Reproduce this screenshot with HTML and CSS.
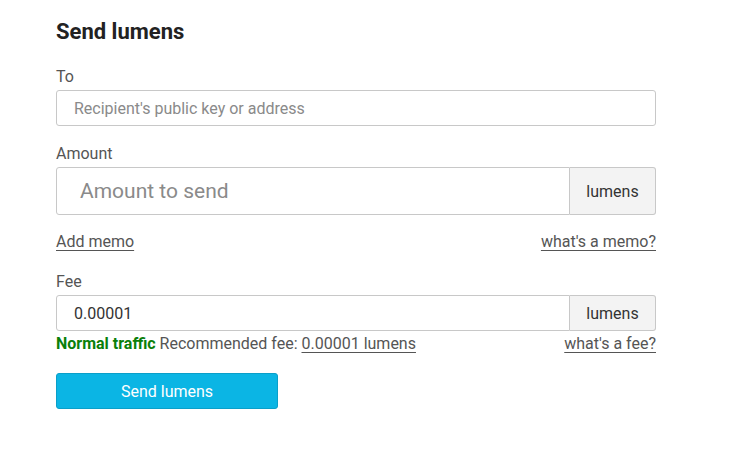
FILE: index.html
```html
<!DOCTYPE html>
<html>
<head>
<meta charset="utf-8">
<link rel="stylesheet" href="styles.css">
</head>
<body>
<div class="send">
  <h1 class="title">Send lumens</h1>
  <div class="field">
    <label class="label">To</label>
    <div class="input input--sm"><span class="placeholder">Recipient's public key or address</span></div>
  </div>
  <div class="field field--amount">
    <label class="label">Amount</label>
    <div class="group group--lg">
      <div class="input input--lg"><span class="placeholder placeholder--lg">Amount to send</span></div>
      <div class="addon">lumens</div>
    </div>
  </div>
  <div class="links">
    <a class="link">Add memo</a>
    <a class="link">what's a memo?</a>
  </div>
  <div class="field field--fee">
    <label class="label">Fee</label>
    <div class="group">
      <div class="input input--sm"><span class="value">0.00001</span></div>
      <div class="addon">lumens</div>
    </div>
    <div class="help">
      <span><b class="traffic">Normal traffic</b> Recommended fee: <a class="link">0.00001 lumens</a></span>
      <a class="link">what's a fee?</a>
    </div>
  </div>
  <button class="btn">Send lumens</button>
</div>
</body>
</html>
```

FILE: styles.css
```css
* { box-sizing: border-box; }
html, body { margin: 0; background: #fff; }
body {
  font-family: Roboto, "Liberation Sans", sans-serif;
  font-size: 16px;
  color: #444;
}
.send {
  width: 656px;
  padding: 19px 0 0 56px;
}
.title {
  margin: 0 0 22px;
  font-size: 22px;
  line-height: 26px;
  font-weight: 700;
  color: #222;
}
.field { display: flex; flex-direction: column; }
.label {
  font-size: 16px;
  line-height: 20px;
  color: #555;
  margin-bottom: 3px;
}
.input {
  display: flex;
  align-items: center;
  border: 1px solid #c8c8c8;
  border-radius: 3px;
  background: #fff;
  padding-left: 17px;
}
.input--sm { height: 36px; }
.input--lg { height: 48px; padding-left: 23px; }
.placeholder { color: #8a8a8a; font-size: 16px; }
.placeholder--lg { font-size: 21px; }
.value { color: #333; font-size: 16px; }
.field--amount { margin-top: 18px; }
.group { display: flex; }
.group .input { flex: 1; border-radius: 3px 0 0 3px; }
.addon {
  width: 86px;
  display: flex;
  align-items: center;
  justify-content: center;
  background: #f3f3f3;
  border: 1px solid #c8c8c8;
  border-left: none;
  border-radius: 0 3px 3px 0;
  color: #333;
  font-size: 16px;
}
.links {
  display: flex;
  justify-content: space-between;
  margin-top: 17px;
  line-height: 20px;
}
.link {
  color: #555;
  text-decoration: underline;
  text-underline-offset: 3px;
  font-size: 16px;
}
.field--fee { margin-top: 20px; }
.help {
  display: flex;
  justify-content: space-between;
  margin-top: 3px;
  line-height: 20px;
  font-size: 16px;
  color: #555;
}
.traffic { color: #0a7f0a; font-weight: 700; }
.btn {
  display: block;
  margin-top: 19px;
  width: 222px;
  height: 36px;
  background: #0bb5e4;
  border: 1px solid #0a9fc9;
  border-radius: 3px;
  color: #fff;
  font-family: inherit;
  font-size: 16px;
  padding: 0;
}
```
